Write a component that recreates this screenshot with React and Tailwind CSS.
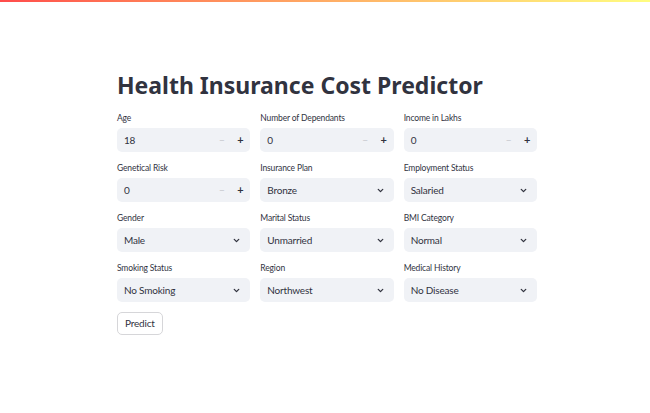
import { ChevronDown } from 'lucide-react'

const font = { fontFamily: 'Lato, "Noto Sans", sans-serif' }

function NumberField({ label, value }) {
  return (
    <div className="flex flex-col">
      <label className="text-[8.5px] tracking-[-0.15px] text-[#31333f] leading-[12px] mb-[4px]">{label}</label>
      <div className="h-[24px] bg-[#f0f2f6] rounded-[5px] flex items-center pl-[7px] text-[10px] tracking-[-0.2px] text-[#31333f]">
        <span className="flex-1">{value}</span>
        <span className="w-[19px] text-center text-[#c4c6cc] text-[10px]">−</span>
        <span className="w-[19px] text-center text-[#31333f] font-bold text-[11px] pr-[1px]">+</span>
      </div>
    </div>
  )
}

function SelectField({ label, value }) {
  return (
    <div className="flex flex-col">
      <label className="text-[8.5px] tracking-[-0.15px] text-[#31333f] leading-[12px] mb-[4px]">{label}</label>
      <div className="h-[24px] bg-[#f0f2f6] rounded-[5px] flex items-center pl-[7px] pr-[9px] text-[10px] tracking-[-0.2px] text-[#31333f]">
        <span className="flex-1">{value}</span>
        <ChevronDown className="w-[9px] h-[9px]" strokeWidth={3.5} />
      </div>
    </div>
  )
}

export default function App() {
  return (
    <div className="w-[650px] h-[413px] bg-white overflow-hidden" style={font}>
      <div className="h-[2px] bg-gradient-to-r from-[#ff4b4b] to-[#fffd80]" />
      <div className="w-[420px] ml-[117px] pt-[67px]">
        <h1
          className="text-[23px] font-bold text-[#31333f] leading-[32px] mb-[11px]"
          style={{ fontFamily: '"Noto Sans", sans-serif' }}
        >
          Health Insurance Cost Predictor
        </h1>
        <div className="grid grid-cols-3 gap-x-[10px] gap-y-[10px]">
          <NumberField label="Age" value="18" />
          <NumberField label="Number of Dependants" value="0" />
          <NumberField label="Income in Lakhs" value="0" />
          <NumberField label="Genetical Risk" value="0" />
          <SelectField label="Insurance Plan" value="Bronze" />
          <SelectField label="Employment Status" value="Salaried" />
          <SelectField label="Gender" value="Male" />
          <SelectField label="Marital Status" value="Unmarried" />
          <SelectField label="BMI Category" value="Normal" />
          <SelectField label="Smoking Status" value="No Smoking" />
          <SelectField label="Region" value="Northwest" />
          <SelectField label="Medical History" value="No Disease" />
        </div>
        <button className="mt-[10px] h-[23px] px-[7px] border border-[#d6d6d9] rounded-[5px] bg-white text-[10px] tracking-[-0.2px] text-[#31333f]">
          Predict
        </button>
      </div>
    </div>
  )
}
